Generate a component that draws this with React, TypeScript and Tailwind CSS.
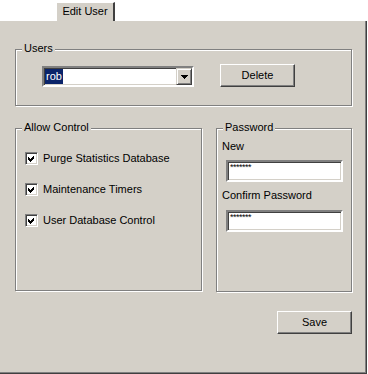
import React from "react";

function Group({ label, className, children }: { label: string; className: string; children?: React.ReactNode }) {
  return (
    <div className={`relative border border-[#808080] shadow-[inset_1px_1px_0_#ffffff,1px_1px_0_#ffffff] ${className}`}>
      <span className="absolute left-[6px] top-[-8px] bg-[#d4d0c8] px-[2px] leading-[13px] whitespace-nowrap">{label}</span>
      {children}
    </div>
  );
}

function Button({ label, className }: { label: string; className: string }) {
  return (
    <div
      className={`w-[75px] h-[23px] flex items-center justify-center border border-white border-r-[#404040] border-b-[#404040] shadow-[inset_-1px_-1px_0_#808080] leading-[13px] ${className}`}
    >
      {label}
    </div>
  );
}

function Check({ label }: { label: string }) {
  return (
    <div className="flex items-center h-[13px]">
      <div className="w-[13px] h-[13px] border border-[#808080] border-r-white border-b-white shadow-[inset_1px_1px_0_#404040,inset_-1px_-1px_0_#d4d0c8] bg-white relative">
        <svg width="13" height="13" viewBox="0 0 13 13" className="absolute left-[-1px] top-[-1px]" shapeRendering="crispEdges">
          <path d="M3 5 L5 7 L9 3 L9 6 L5 10 L3 8 Z" fill="#000000" />
        </svg>
      </div>
      <span className="ml-[5px] leading-[13px] whitespace-nowrap">{label}</span>
    </div>
  );
}

function PwInput({ className }: { className?: string }) {
  return (
    <div
      className={`w-[117px] h-[22px] bg-white border-2 border-t-[#808080] border-l-[#808080] border-r-white border-b-white shadow-[inset_1px_1px_0_#404040,inset_-1px_-1px_0_#d4d0c8] pl-[2px] pt-[0px] text-[9px] leading-[10px] tracking-[-0.5px] ${className ?? ""}`}
    >
      *******
    </div>
  );
}

export default function App() {
  return (
    <div className="w-[368px] h-[374px] bg-white flex flex-col font-['Liberation_Sans',Arial,sans-serif] text-[11px] text-black">
      <div className="h-[21px] flex items-end pl-[56px] shrink-0">
        <div className="w-[59px] h-[19px] bg-[#d4d0c8] border-l border-t border-white border-r-2 border-r-[#404040] flex items-center justify-center leading-[13px] pb-[1px]">
          Edit User
        </div>
      </div>
      <div className="w-[367px] h-[353px] bg-[#d4d0c8] border-r border-b border-[#404040] shadow-[inset_-1px_-1px_0_#808080] pl-[15px] pt-[28px] flex flex-col">
        <Group label="Users" className="w-[337px] h-[57px] shrink-0">
          <div className="flex items-start pl-[26px] pt-[16px]">
            <div className="w-[152px] h-[21px] bg-white border-2 border-t-[#808080] border-l-[#808080] border-r-white border-b-white shadow-[inset_1px_1px_0_#404040,inset_-1px_-1px_0_#d4d0c8] flex items-stretch">
              <div className="flex-1 flex items-center pl-[1px]">
                <span className="bg-[#0a246a] text-white h-[15px] leading-[15px] px-[1px]">rob</span>
              </div>
              <div className="w-[16px] h-[17px] bg-[#d4d0c8] border border-[#d4d0c8] border-r-[#404040] border-b-[#404040] shadow-[inset_1px_1px_0_#ffffff,inset_-1px_-1px_0_#808080] flex items-center justify-center">
                <svg width="7" height="4" viewBox="0 0 7 4" shapeRendering="crispEdges">
                  <path d="M0 0 H7 L3.5 4 Z" fill="#000000" />
                </svg>
              </div>
            </div>
            <Button label="Delete" className="ml-[26px] mt-[-2px]" />
          </div>
        </Group>
        <div className="flex items-start mt-[22px] shrink-0">
          <Group label="Allow Control" className="w-[187px] h-[163px]">
            <div className="flex flex-col gap-[18px] pl-[9px] pt-[23px]">
              <Check label="Purge Statistics Database" />
              <Check label="Maintenance Timers" />
              <Check label="User Database Control" />
            </div>
          </Group>
          <Group label="Password" className="w-[136px] h-[164px] ml-[14px]">
            <div className="flex flex-col pl-[5px] pt-[11px]">
              <span className="leading-[13px]">New</span>
              <PwInput className="ml-[4px] mt-[7px]" />
              <span className="leading-[13px] mt-[7px]">Confirm Password</span>
              <PwInput className="ml-[4px] mt-[8px]" />
            </div>
          </Group>
        </div>
        <Button label="Save" className="ml-[262px] mt-[19px] shrink-0" />
      </div>
    </div>
  );
}
